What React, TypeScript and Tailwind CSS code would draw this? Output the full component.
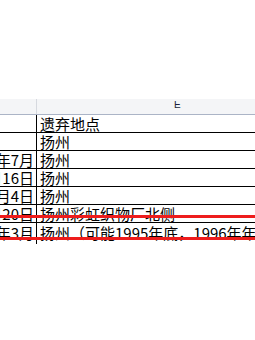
import React from "react";

type Row = { date: string; place: string };

const rows: Row[] = [
  { date: "", place: "遗弃地点" },
  { date: "", place: "扬州" },
  { date: "1995年7月", place: "扬州" },
  { date: "1995年7月16日", place: "扬州" },
  { date: "1995年8月4日", place: "扬州" },
  { date: "1995年8月20日", place: "扬州彩虹织物厂北侧" },
  { date: "1996年3月", place: "扬州（可能1995年底，1996年年初）" },
];

export default function App() {
  return (
    <div
      className="relative w-[255px] h-[340px] overflow-hidden bg-white text-black"
      style={{ fontFamily: '"Noto Sans CJK SC", sans-serif' }}
    >
      <div className="h-[99px]" />

      {/* column header strip */}
      <div className="flex h-[16px] bg-[#f4f5f7] border-b border-[#abb4c6]">
        <div className="w-[37px] border-r border-[#d6d9df]" />
        <div className="flex-1 pl-[137px] pt-[2px]">
          <div className="h-[8px] overflow-hidden">
            <div
              className="-mt-[1px] text-[10px] leading-[10px] text-[#1a1f3a]"
              style={{ fontFamily: '"Liberation Sans", sans-serif' }}
            >
              E
            </div>
          </div>
        </div>
      </div>

      {/* data rows */}
      {rows.map((r, i) => {
        const last = i === rows.length - 1;
        return (
          <div
            key={i}
            className={
              last
                ? "flex h-[18px]"
                : "flex h-[18px] border-b border-black"
            }
          >
            <div className="w-[37px] shrink-0 border-r border-black overflow-hidden flex justify-end items-center pr-[2px] whitespace-nowrap text-[15px] leading-[17px]">
              {r.date}
            </div>
            <div className="flex-1 min-w-0 overflow-hidden whitespace-nowrap flex items-center pl-[3px] text-[15px] leading-[17px]">
              {r.place}
            </div>
          </div>
        );
      })}
      <div className="flex h-[3px]">
        <div className="w-[37px] border-r border-black" />
      </div>

      {/* red underline marks drawn across the sheet */}
      <div className="absolute left-0 right-0 top-[215px] h-[3px] bg-[#ee1c1c]" />
      <div className="absolute left-0 right-0 top-[237px] h-[3px] bg-[#ee1c1c]" />
    </div>
  );
}
